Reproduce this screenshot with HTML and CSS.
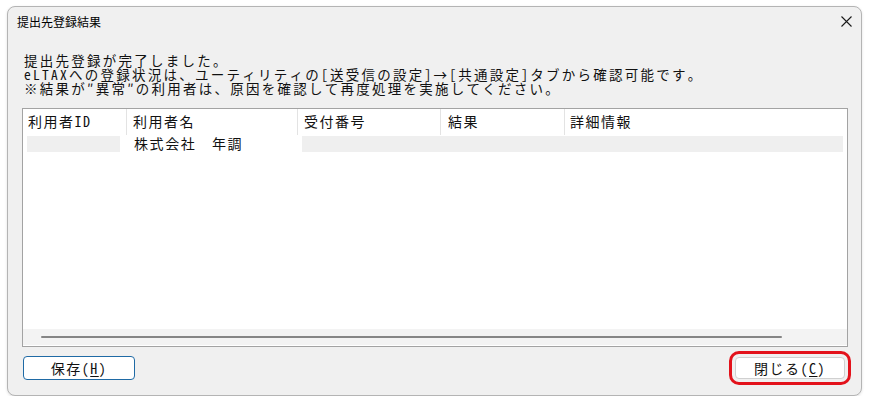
FILE: index.html
```html
<!DOCTYPE html>
<html lang="ja">
<head>
<meta charset="utf-8">
<link rel="stylesheet" href="styles.css">
</head>
<body>
<div class="window">
  <div class="titlebar">
    <span class="title">提出先登録結果</span>
    <svg class="close-x" width="11" height="11" viewBox="0 0 11 11"><path d="M0.5 0.5 L10.5 10.5 M10.5 0.5 L0.5 10.5" stroke="#1a1a1a" stroke-width="1.1" fill="none"/></svg>
  </div>
  <div class="message">
    <div>提出先登録が完了しました。</div>
    <div>eLTAXへの登録状況は、ユーティリティの[送受信の設定]→[共通設定]タブから確認可能です。</div>
    <div>※結果が″異常″の利用者は、原因を確認して再度処理を実施してください。</div>
  </div>
  <div class="list">
    <div class="head">
      <div class="hc c1">利用者ID</div>
      <div class="hc c2">利用者名</div>
      <div class="hc c3">受付番号</div>
      <div class="hc c4">結果</div>
      <div class="hc c5">詳細情報</div>
    </div>
    <div class="row">
      <div class="g1"></div>
      <div class="name">株式会社　年調</div>
      <div class="g2"></div>
    </div>
    <div class="spacer"></div>
    <div class="hscroll"><div class="thumb"></div></div>
  </div>
  <div class="footer">
    <button class="btn save">保存(<u>H</u>)</button>
    <button class="btn closebtn">閉じる(<u>C</u>)</button>
  </div>
</div>
</body>
</html>
```
FILE: styles.css
```css
html, body {
  margin: 0;
  padding: 0;
  background: #ffffff;
}
body {
  padding: 6px 7px 0 7px;
  font-family: "Noto Sans Mono CJK JP", "Noto Sans CJK JP", sans-serif;
  color: #000;
}
.window {
  width: 855px;
  height: 390px;
  box-sizing: border-box;
  border: 1px solid #b4b4b4;
  border-radius: 8px;
  background: #f0f0f0;
  box-shadow: 0 1px 3px rgba(0,0,0,0.12);
  display: flex;
  flex-direction: column;
}
.titlebar {
  height: 29px;
  display: flex;
  align-items: center;
  justify-content: space-between;
  padding: 0 9px 0 9px;
  flex: none;
}
.title {
  font-family: "Noto Sans CJK JP", sans-serif;
  font-size: 12px;
  line-height: 14px;
}
.message {
  margin: 17px 0 0 16px;
  font-size: 13.5px;
  line-height: 14px;
  font-weight: 400;
  letter-spacing: 2.25px;
  white-space: nowrap;
  color: #111;
}
.list {
  margin: 13px 0 0 14px;
  width: 826px;
  height: 239px;
  box-sizing: border-box;
  border: 1px solid #a3a3a3;
  background: #ffffff;
  display: flex;
  flex-direction: column;
  flex: none;
}
.head {
  height: 26px;
  display: flex;
  align-items: stretch;
  flex: none;
  margin-right: 4px;
}
.hc {
  font-size: 14px;
  line-height: 24px;
  padding-left: 5px;
  box-sizing: border-box;
  border-right: 1px solid #e3e3e3;
  white-space: nowrap;
  letter-spacing: 1.5px;
  color: #111;
}
.c1 { width: 104px; }
.c2 { width: 171px; padding-left: 6px; }
.c3 { width: 143px; padding-left: 6px; }
.c4 { width: 124px; padding-left: 7px; }
.c5 { flex: 1; border-right: none; }
.row {
  height: 16px;
  display: flex;
  margin-top: 1px;
  flex: none;
  margin-right: 4px;
}
.g1 {
  margin-left: 4px;
  width: 93px;
  background: #efefef;
}
.name {
  width: 182px;
  font-size: 14px;
  line-height: 14px;
  padding-left: 14px;
  box-sizing: border-box;
  white-space: nowrap;
  letter-spacing: 1.6px;
  color: #111;
}
.g2 {
  flex: 1;
  background: #efefef;
}
.spacer {
  flex: 1;
}
.hscroll {
  height: 16px;
  margin: 0 0 1px 0;
  background: #f3f3f3;
  display: flex;
  align-items: center;
  flex: none;
}
.thumb {
  margin-left: 18px;
  width: 741px;
  height: 2px;
  background: #858585;
  border-radius: 1px;
}
.footer {
  display: flex;
  justify-content: space-between;
  align-items: flex-start;
  padding: 0 16px 0 15px;
  margin-top: 9px;
}
.btn {
  font-family: "Noto Sans Mono CJK JP", "Noto Sans CJK JP", sans-serif;
  font-size: 14px;
  line-height: 18px;
  background: #ffffff;
  color: #111;
  padding: 0;
  letter-spacing: 1.5px;
}
.btn u {
  text-underline-offset: 2px;
}
.save {
  width: 112px;
  height: 24px;
  border: 1px solid #1f6aa5;
  border-radius: 4px;
}
.closebtn {
  width: 110px;
  height: 22px;
  margin-top: 1px;
  border: 1px solid #d0d0d0;
  border-radius: 4px;
  outline: 3px solid #e3121b;
  outline-offset: 3px;
}
```
